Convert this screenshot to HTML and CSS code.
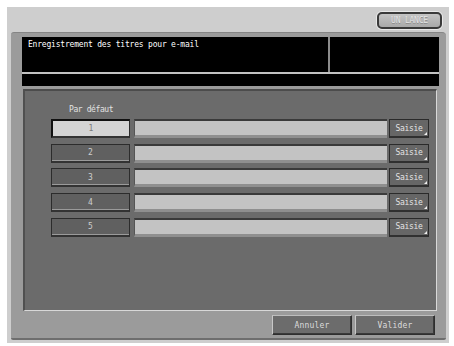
FILE: index.html
```
<!DOCTYPE html>
<html lang="fr">
<head>
  <meta charset="UTF-8">
  <meta name="viewport" content="width=device-width, initial-scale=1.0">
  <title>Enregistrement des titres</title>
  <link rel="stylesheet" href="styles.css">
</head>
<body>

<div class="screen">
  <div class="topbar">
    <button class="job-btn">UN LANCE</button>
  </div>

  <div class="panel">
    <div class="header">
      <div class="header-title">Enregistrement des titres pour e-mail</div>
      <div class="header-side"></div>
    </div>
    <div class="msgbar"></div>

    <div class="inner">
      <div class="default-label">Par défaut</div>
      <div class="rows">
        <div class="row">
          <button class="num selected">1</button>
          <div class="field"></div>
          <button class="saisie">Saisie</button>
        </div>
        <div class="row">
          <button class="num">2</button>
          <div class="field"></div>
          <button class="saisie">Saisie</button>
        </div>
        <div class="row">
          <button class="num">3</button>
          <div class="field"></div>
          <button class="saisie">Saisie</button>
        </div>
        <div class="row">
          <button class="num">4</button>
          <div class="field"></div>
          <button class="saisie">Saisie</button>
        </div>
        <div class="row">
          <button class="num">5</button>
          <div class="field"></div>
          <button class="saisie">Saisie</button>
        </div>
      </div>
    </div>

    <div class="footer">
      <button class="btn">Annuler</button>
      <button class="btn">Valider</button>
    </div>
  </div>
</div>

</body>
</html>
```

FILE: styles.css
```
body {
  margin: 0;
  background: #fff;
  font-family: "DejaVu Sans Mono", "Liberation Mono", monospace;
  font-size: 8px;
}
button {
  font-family: inherit;
  font-size: 8px;
  padding: 0;
  margin: 0;
  cursor: pointer;
}
.screen {
  margin: 7px 0 0 7px;
  width: 442px;
  height: 336px;
  background: #cecece;
  box-sizing: border-box;
  display: flex;
  flex-direction: column;
}
.topbar {
  height: 25px;
  display: flex;
  justify-content: flex-end;
  align-items: flex-start;
  padding: 5px 7px 0 0;
  box-sizing: border-box;
}
.job-btn {
  width: 65px;
  height: 17px;
  border: 2px solid #3a3a3a;
  border-radius: 5px;
  background: linear-gradient(#c4c4c4, #a9a9a9);
  color: #e6e6e6;
  letter-spacing: -0.2px;
  text-shadow: 0 1px 0 #8a8a8a;
  box-shadow: 0 0 0 1px #e8e8e8;
}
.panel {
  margin-left: 4px;
  width: 435px;
  height: 308px;
  background: #9b9b9b;
  border-top: 1px solid #858585;
  border-bottom: 2px solid #6e6e6e;
  border-radius: 3px 4px 2px 2px;
  box-sizing: border-box;
  padding: 4px 7px 0 11px;
  display: flex;
  flex-direction: column;
}
.header {
  height: 37px;
  display: flex;
  background: #000;
  border-bottom: 2px solid #c2c2c2;
  box-sizing: border-box;
}
.header-title {
  width: 308px;
  box-sizing: border-box;
  border-right: 2px solid #8c8c8c;
  color: #fff;
  padding: 3px 0 0 6px;
  letter-spacing: -0.2px;
}
.header-side {
  flex: 1;
}
.msgbar {
  height: 12px;
  background: #000;
}
.inner {
  margin: 3px 2px 0 1px;
  height: 222px;
  background: #6b6b6b;
  border-top: 2px solid #4c4c4c;
  border-left: 2px solid #505050;
  border-right: 1px solid #d8d8d8;
  border-bottom: 1px solid #d8d8d8;
  box-sizing: border-box;
  padding: 14px 7px 0 26px;
}
.default-label {
  color: #e2e2e2;
  padding-left: 18px;
  height: 14px;
  letter-spacing: -0.4px;
}
.rows {
  display: flex;
  flex-direction: column;
  gap: 5px;
}
.row {
  display: flex;
  height: 19.7px;
}
.num {
  width: 79px;
  height: 19px;
  background: #606060;
  color: #cfcfcf;
  border: 1px solid #2c2c2c;
  border-bottom: 2px solid #333;
  box-shadow: inset 0 -1px 0 #9a9a9a;
}
.num.selected {
  background: #d4d4d4;
  color: #7a7a7a;
  border-top: 2px solid #111;
  border-left: 2px solid #111;
  box-shadow: none;
}
.field {
  margin-left: 4px;
  width: 253px;
  height: 19px;
  background: #c3c3c3;
  border-top: 2px solid #3a3a3a;
  border-left: 1px solid #555;
  border-bottom: 3px solid #8f8f8f;
  box-sizing: border-box;
}
.saisie {
  position: relative;
  margin-left: 2px;
  width: 40px;
  height: 19px;
  background: #666;
  color: #e4e4e4;
  border: 1px solid #2a2a2a;
  border-bottom: 2px solid #303030;
  letter-spacing: -0.3px;
}
.saisie::after {
  content: "";
  position: absolute;
  right: 1px;
  bottom: 1px;
  border-left: 3px solid transparent;
  border-bottom: 3px solid #f0f0f0;
}
.footer {
  display: flex;
  justify-content: flex-end;
  gap: 3px;
  padding: 4px 4px 0 0;
}
.btn {
  width: 80px;
  height: 20px;
  background: #6c6c6c;
  color: #dcdcdc;
  border: 1px solid #2e2e2e;
  border-left: 1px solid #c8c8c8;
  border-top: 1px solid #bdbdbd;
  box-shadow: inset -1px -1px 0 #3a3a3a;
  letter-spacing: 0.2px;
}
```
